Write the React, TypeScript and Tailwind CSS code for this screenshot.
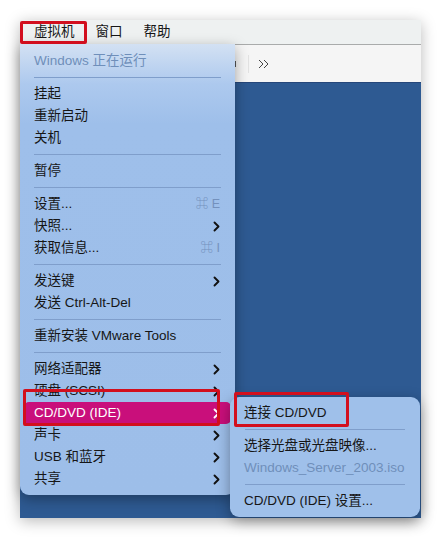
import React from 'react'

type Item =
  | { kind: 'sep' }
  | { kind: 'item'; label: string; disabled?: boolean; shortcut?: string; submenu?: boolean; active?: boolean }

const font = { fontFamily: '"Liberation Sans", "Noto Sans CJK SC", sans-serif' }

const mainItems: Item[] = [
  { kind: 'item', label: 'Windows 正在运行', disabled: true },
  { kind: 'sep' },
  { kind: 'item', label: '挂起' },
  { kind: 'item', label: '重新启动' },
  { kind: 'item', label: '关机' },
  { kind: 'sep' },
  { kind: 'item', label: '暂停' },
  { kind: 'sep' },
  { kind: 'item', label: '设置...', shortcut: '⌘ E' },
  { kind: 'item', label: '快照...', submenu: true },
  { kind: 'item', label: '获取信息...', shortcut: '⌘ I' },
  { kind: 'sep' },
  { kind: 'item', label: '发送键', submenu: true },
  { kind: 'item', label: '发送 Ctrl-Alt-Del' },
  { kind: 'sep' },
  { kind: 'item', label: '重新安装 VMware Tools' },
  { kind: 'sep' },
  { kind: 'item', label: '网络适配器', submenu: true },
  { kind: 'item', label: '硬盘 (SCSI)', submenu: true },
  { kind: 'item', label: 'CD/DVD (IDE)', submenu: true, active: true },
  { kind: 'item', label: '声卡', submenu: true },
  { kind: 'item', label: 'USB 和蓝牙', submenu: true },
  { kind: 'item', label: '共享', submenu: true },
]

const subItems: Item[] = [
  { kind: 'item', label: '连接 CD/DVD' },
  { kind: 'sep' },
  { kind: 'item', label: '选择光盘或光盘映像...' },
  { kind: 'item', label: 'Windows_Server_2003.iso', disabled: true },
  { kind: 'sep' },
  { kind: 'item', label: 'CD/DVD (IDE) 设置...' },
]

const Chevron = ({ white }: { white?: boolean }) => (
  <svg width="7" height="11" viewBox="0 0 7 11" fill="none">
    <path d="M1.5 1.5l4 4-4 4" stroke={white ? '#ffffff' : '#111111'} strokeWidth="1.9" strokeLinecap="round" strokeLinejoin="round" />
  </svg>
)

const MenuList = ({ items, sepClass }: { items: Item[]; sepClass: string }) => (
  <>
    {items.map((it, i) =>
      it.kind === 'sep' ? (
        <div key={i} className="h-[11px] flex items-center">
          <div className={`h-px bg-[#7f9ecb] ${sepClass}`} />
        </div>
      ) : (
        <div
          key={i}
          className={`h-[22px] mx-[4px] pl-[10px] pr-[11px] flex items-center justify-between rounded-[5px] text-[13.5px] ${
            it.active ? 'bg-[#c90f7b] text-white' : it.disabled ? 'text-[#6f8fba]' : 'text-[#161616]'
          }`}
        >
          <span className="whitespace-nowrap">{it.label}</span>
          {it.shortcut && <span className="text-[#7491bd] text-[12.5px]">{it.shortcut}</span>}
          {it.submenu && <Chevron white={it.active} />}
        </div>
      )
    )}
  </>
)

export default function App() {
  return (
    <div className="w-[441px] h-[539px] bg-white pt-[20px] pl-[20px]" style={font}>
      <div className="relative w-[401px] h-[498px] flex flex-col shadow-[0_3px_14px_rgba(0,0,0,0.28)]">
        {/* menu bar */}
        <div className="h-[25px] bg-[#eef1f1] border-b border-[#a9abab] flex items-center text-[13.5px] text-[#161616]">
          <span className="ml-[14px]">虚拟机</span>
          <span className="ml-[21px]">窗口</span>
          <span className="ml-[21px]">帮助</span>
        </div>
        {/* toolbar */}
        <div className="h-[38px] bg-[#f5f5f5] border-b border-[#26477a] flex items-center">
          <div className="ml-[214px] w-[2px] h-[6px] bg-[#555]" />
          <div className="ml-[12px] w-px h-[18px] bg-[#e2e2e2]" />
          <svg className="ml-[9px]" width="12" height="10" viewBox="0 0 12 10" fill="none">
            <path d="M1 1l4 4-4 4M6 1l4 4-4 4" stroke="#444" strokeWidth="1" />
          </svg>
        </div>
        {/* vm display */}
        <div className="flex-1 bg-[#2e5a92]" />

        {/* main dropdown */}
        <div className="absolute left-0 top-[24px] w-[215px] pt-[6px] pb-[5px] rounded-b-[9px] bg-[linear-gradient(to_bottom,#d3e1f3_0px,#adc9ee_40px,#9ebfea_80px,#9dbee9_100%)] shadow-[0_4px_14px_rgba(0,0,0,0.35)]">
          <MenuList items={mainItems} sepClass="ml-[14px] mr-[14px] flex-1" />
        </div>

        {/* submenu */}
        <div className="absolute left-[210px] top-[377px] w-[190px] pt-[5px] pb-[5px] rounded-[9px] bg-[#9fc0ea] shadow-[0_4px_14px_rgba(0,0,0,0.35)]">
          <MenuList items={subItems} sepClass="ml-[15px] mr-[15px] flex-1" />
        </div>

        {/* annotation boxes */}
        <div className="absolute left-0 top-[1px] w-[67px] h-[23px] border-[3px] border-[#d20f1e] rounded-[2px] pointer-events-none" />
        <div className="absolute left-[3px] top-[369px] w-[197px] h-[37px] border-[3px] border-[#d20f1e] rounded-[2px] pointer-events-none" />
        <div className="absolute left-[214px] top-[372px] w-[115px] h-[35px] border-[3px] border-[#d20f1e] rounded-[2px] pointer-events-none" />
      </div>
    </div>
  )
}
